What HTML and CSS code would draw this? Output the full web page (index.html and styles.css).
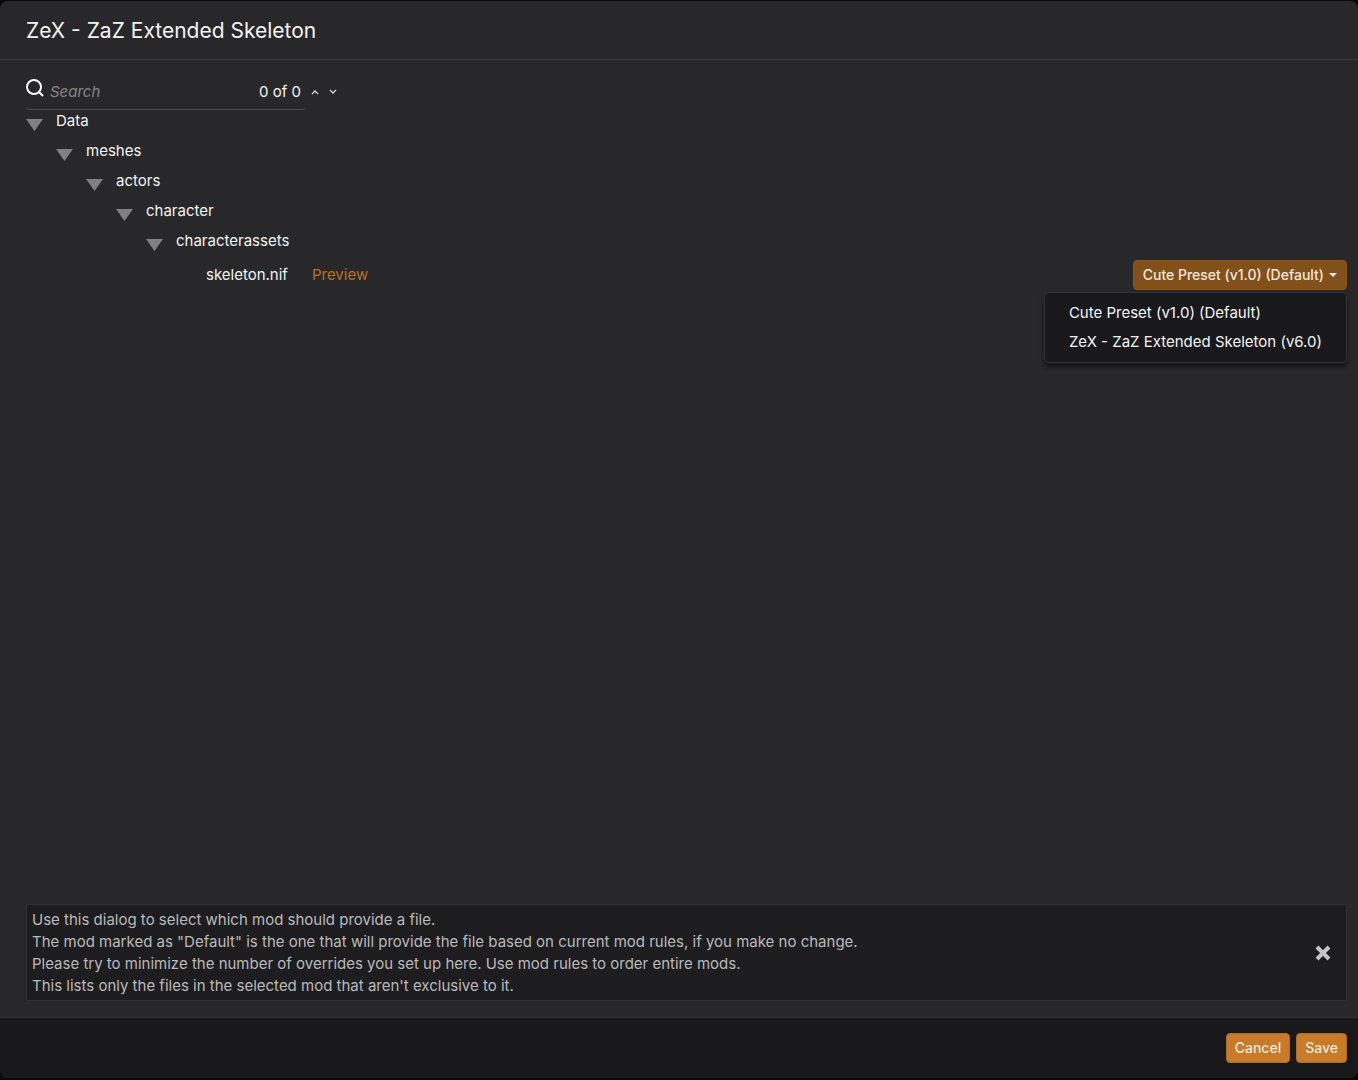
FILE: index.html
```html
<!DOCTYPE html>
<html lang="en">
  <head>
    <meta charset="utf-8" />
    <title>ZeX - ZaZ Extended Skeleton</title>
    <link rel="stylesheet" href="styles.css">
  </head>

  <body>
    <div class="dialog">
      <header class="dialog-header">
        <h1>ZeX - ZaZ Extended Skeleton</h1>
      </header>

      <main class="dialog-body">
        <div class="search-row">
          <div class="search-box">
            <label for="search" aria-label="Search">
              <svg class="search-icon" width="20" height="20" viewBox="0 0 20 20">
                <circle cx="8" cy="7" r="7" />
                <path d="M13 12 L17 16" />
              </svg>
            </label>
            <input type="text" id="search" placeholder="Search">
            <span class="search-count">0 of 0</span>
          </div>
          <button class="search-nav" aria-label="Previous match">
            <svg width="10" height="6" viewBox="0 0 10 6"><path d="M2 5 L5 2 L8 5" /></svg>
          </button>
          <button class="search-nav" aria-label="Next match">
            <svg width="10" height="6" viewBox="0 0 10 6"><path d="M2 1 L5 4 L8 1" /></svg>
          </button>
        </div>

        <ul class="tree">
          <li>
            <div class="tree-row"><button class="toggle" aria-label="Collapse Data"></button><span>Data</span></div>
            <ul>
              <li>
                <div class="tree-row"><button class="toggle" aria-label="Collapse meshes"></button><span>meshes</span></div>
                <ul>
                  <li>
                    <div class="tree-row"><button class="toggle" aria-label="Collapse actors"></button><span>actors</span></div>
                    <ul>
                      <li>
                        <div class="tree-row"><button class="toggle" aria-label="Collapse character"></button><span>character</span></div>
                        <ul>
                          <li>
                            <div class="tree-row"><button class="toggle" aria-label="Collapse characterassets"></button><span>characterassets</span></div>
                            <ul>
                              <li class="file-row">
                                <span>skeleton.nif</span>
                                <a href="#" class="preview">Preview</a>
                                <div class="dropdown">
                                  <button class="btn btn-open" aria-haspopup="true" aria-expanded="true">Cute Preset (v1.0) (Default)<span class="caret"></span></button>
                                  <div class="menu">
                                    <button class="menu-item">Cute Preset (v1.0) (Default)</button>
                                    <button class="menu-item">ZeX - ZaZ Extended Skeleton (v6.0)</button>
                                  </div>
                                </div>
                              </li>
                            </ul>
                          </li>
                        </ul>
                      </li>
                    </ul>
                  </li>
                </ul>
              </li>
            </ul>
          </li>
        </ul>

        <div class="info-box">
          <p>
            Use this dialog to select which mod should provide a file.<br>
            The mod marked as "Default" is the one that will provide the file based on current mod rules, if you make no change.<br>
            Please try to minimize the number of overrides you set up here. Use mod rules to order entire mods.<br>
            This lists only the files in the selected mod that aren't exclusive to it.
          </p>
          <button class="info-close" aria-label="Close">
            <svg width="18" height="18" viewBox="0 0 18 18"><path d="M3 3 L15 15 M15 3 L3 15" /></svg>
          </button>
        </div>
      </main>

      <footer class="dialog-footer">
        <button class="btn">Cancel</button>
        <button class="btn">Save</button>
      </footer>
    </div>
  </body>
</html>
```
FILE: styles.css
```css
* {
  box-sizing: border-box;
}

body {
  margin: 0;
  padding: 1px 0 2px;
  height: 100vh;
  background-color: #09090b;
  color: #f4f4f5;
  font-family: "Inter", sans-serif;
  font-size: 15px;
  line-height: 22px;
}

button,
input {
  font: inherit;
  color: inherit;
  background: none;
  border: none;
  padding: 0;
}

button {
  cursor: pointer;
}

.dialog {
  display: flex;
  flex-direction: column;
  height: 100%;
  border-radius: 8px;
  background-color: #28282a;
  overflow: hidden;
}

.dialog-header {
  padding: 15px 26px 14px;
  border-bottom: 1px solid #3d3d40;
}

h1 {
  margin: 0;
  font-size: 21px;
  font-weight: 400;
  line-height: 29px;
}

.dialog-body {
  display: flex;
  flex: 1;
  flex-direction: column;
  padding: 14px 11px 16px 26px;
}

/* search */
.search-row {
  display: flex;
  align-items: center;
}

.search-box {
  display: flex;
  align-items: center;
  width: 280px;
  height: 36px;
  padding-right: 5px;
  border-bottom: 1px solid #4c4c50;
  border-radius: 4px;
}

.search-icon {
  display: block;
  margin-bottom: 4px;
  fill: none;
  stroke: #fff;
  stroke-width: 2;
  overflow: visible;
}

.search-box input {
  flex: 1;
  min-width: 0;
  padding-left: 4px;
  outline: none;
}

.search-box input::placeholder {
  color: #85858c;
  font-style: italic;
}

.search-nav {
  display: flex;
  justify-content: center;
  width: 18px;
}

.search-nav svg {
  fill: none;
  stroke: #d4d4d8;
  stroke-width: 1.3;
}

/* file tree */
.tree {
  flex: 1;
}

.tree,
.tree ul {
  margin: 0;
  padding: 0;
  list-style: none;
}

.tree ul {
  padding-left: 30px;
}

.tree-row {
  display: flex;
  gap: 13px;
  height: 30px;
}

.toggle {
  width: 17px;
  height: 12px;
  margin-top: 9px;
  background-color: #808080;
  clip-path: polygon(0 0, 100% 0, 50% 100%);
}

.file-row {
  display: flex;
  align-items: center;
  padding-left: 30px;
}

.preview {
  margin-left: 24px;
  color: #b8711f;
  text-decoration: none;
}

.btn {
  padding: 3px 8px;
  border: 1px solid #b06c22;
  border-radius: 4px;
  background-color: #c87b28;
  color: #f4e8da;
  font-size: 14px;
  font-weight: 500;
}

.btn-open {
  display: flex;
  align-items: center;
  gap: 5px;
  padding: 3px 9px;
  border-color: #8c561a;
  background-color: #82501b;
}

.caret {
  border-top: 4px solid;
  border-left: 4px solid transparent;
  border-right: 4px solid transparent;
}

.dropdown {
  position: relative;
  margin-left: auto;
}

.menu {
  position: absolute;
  top: 100%;
  right: 0;
  margin-top: 2px;
  padding: 5px 0 6px;
  border: 1px solid #323235;
  border-radius: 4px;
  background-color: #19191b;
  box-shadow: 0 4px 4px rgba(0, 0, 0, 0.5);
}

.menu-item {
  display: block;
  width: 100%;
  padding: 4px 24px 3px;
  text-align: left;
  white-space: nowrap;
}

/* info panel */
.info-box {
  display: flex;
  align-items: center;
  justify-content: space-between;
  padding: 4px 14px 3px 5px;
  border: 1px solid #303033;
  background-color: #1d1d1f;
  color: #bababb;
}

.info-box p {
  margin: 0;
}

.info-close svg {
  display: block;
  fill: none;
  stroke: #c4c4c5;
  stroke-width: 4;
}

.dialog-footer {
  display: flex;
  justify-content: flex-end;
  gap: 6px;
  padding: 15px 11px;
  border-top: 1px solid #303033;
  background-color: #19191b;
}
```
